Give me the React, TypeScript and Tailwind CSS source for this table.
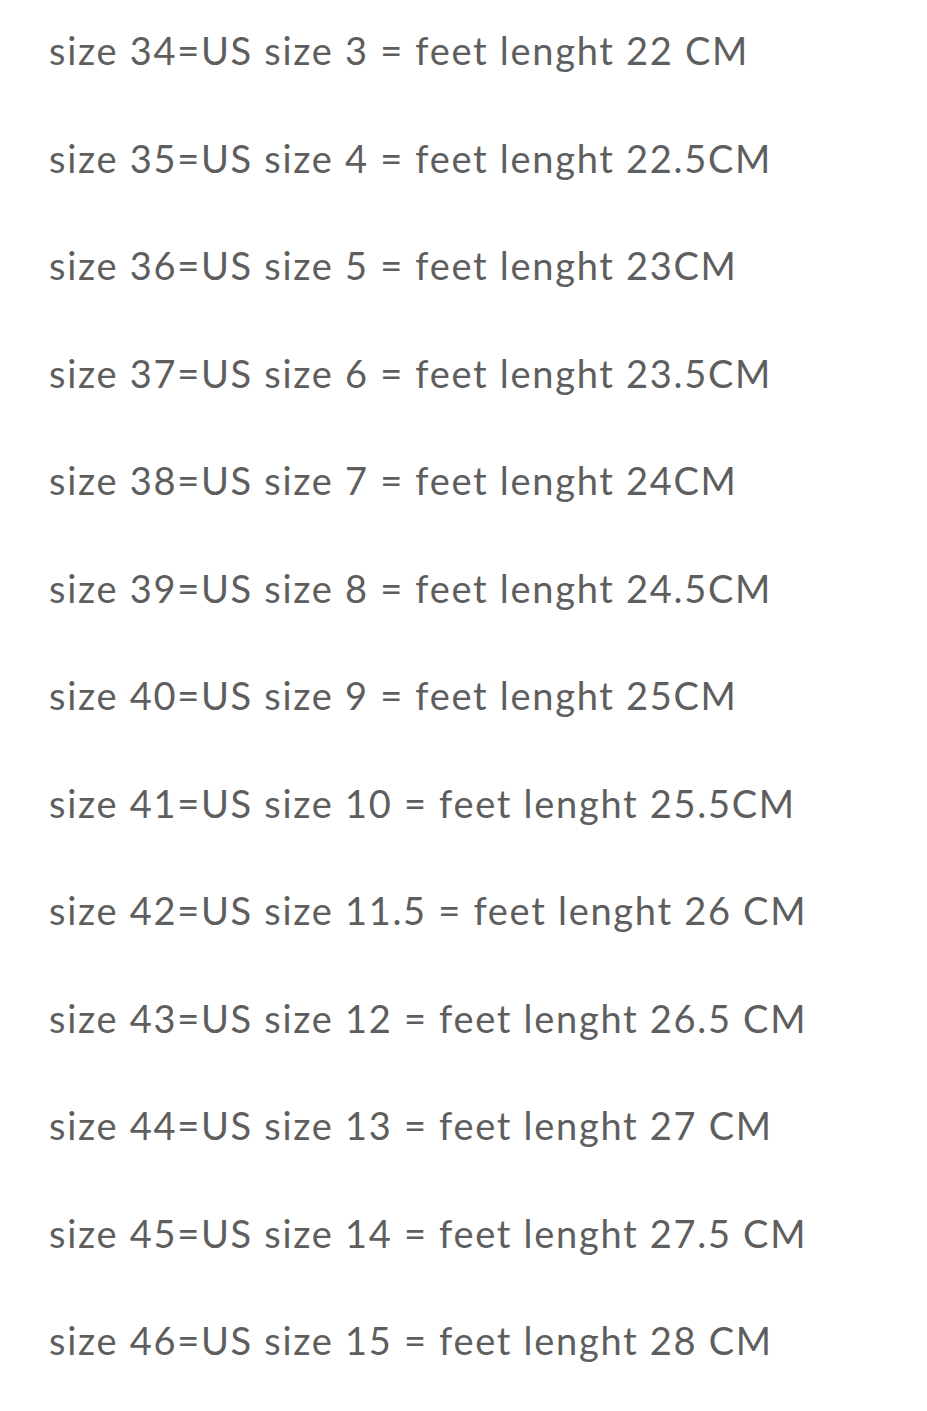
import React from 'react';

const rows: string[] = [
  'size 34=US size 3 = feet lenght 22 CM',
  'size 35=US size 4 = feet lenght 22.5CM',
  'size 36=US size 5 = feet lenght 23CM',
  'size 37=US size 6 = feet lenght 23.5CM',
  'size 38=US size 7 = feet lenght 24CM',
  'size 39=US size 8 = feet lenght 24.5CM',
  'size 40=US size 9 = feet lenght 25CM',
  'size 41=US size 10 = feet lenght 25.5CM',
  'size 42=US size 11.5 = feet lenght 26 CM',
  'size 43=US size 12 = feet lenght 26.5 CM',
  'size 44=US size 13 = feet lenght 27 CM',
  'size 45=US size 14 = feet lenght 27.5 CM',
  'size 46=US size 15 = feet lenght 28 CM',
];

const App: React.FC = () => {
  return (
    <div className="bg-white w-[927px] h-[1411px] overflow-hidden pl-[49px] font-['Lato',sans-serif] text-[#5e5e5e]">
      <div className="-mt-[3px]">
        {rows.map((r) => (
          <p key={r} className="text-[38px] leading-[107.5px] tracking-[1.7px] whitespace-nowrap">
            {r}
          </p>
        ))}
      </div>
    </div>
  );
};

export default App;
